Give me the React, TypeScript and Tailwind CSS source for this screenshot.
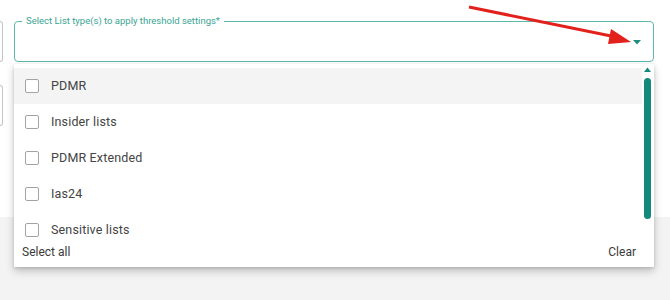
import React from "react";

const listTypes = ["PDMR", "Insider lists", "PDMR Extended", "Ias24", "Sensitive lists"];

const App: React.FC = () => {
  return (
    <div className="relative w-[670px] h-[300px] overflow-hidden bg-[#f3f3f3] font-['Roboto','Liberation_Sans',sans-serif]">
      {/* page card */}
      <div className="flex h-[217px] bg-white">
        <div className="flex w-[3px] flex-col gap-[23px] pt-[21px]">
          <div className="h-[41px] rounded-r-[4px] border border-l-0 border-[#c4c4c4]" />
          <div className="h-[41px] rounded-r-[4px] border border-l-0 border-[#c4c4c4]" />
        </div>
        <div className="ml-[11px] w-[640px]">
          <fieldset className="mt-[15px] h-[47px] rounded-[4px] border border-[#5db8ab] pl-[7px] pr-[12px]">
            <legend className="px-[4px] text-[9.5px] leading-[12px] text-[#3aa493]">
              Select List type(s) to apply threshold settings*
            </legend>
            <div className="flex h-[29px] items-center justify-end pt-[1px]">
              <svg width="8" height="5" viewBox="0 0 8 5">
                <path d="M0 0 L8 0 L4 4.5 Z" fill="#1f8e7f" />
              </svg>
            </div>
          </fieldset>
        </div>
      </div>

      {/* dropdown menu */}
      <div className="absolute left-[14px] top-[64px] flex h-[203px] w-[640px] flex-col bg-white shadow-[0_4px_8px_rgba(0,0,0,0.22),0_1px_3px_rgba(0,0,0,0.12)]">
        <div className="flex h-[176px] overflow-hidden">
          <ul className="flex-1 pt-[4px]">
            {listTypes.map((name, i) => (
              <li
                key={name}
                className={
                  "flex h-[36px] items-center pl-[11px] " + (i === 0 ? "bg-[#f4f4f4]" : "")
                }
              >
                <span className="h-[14px] w-[14px] rounded-[2px] border-[1.5px] border-[#a3a3a3] bg-white" />
                <span className="ml-[12px] text-[12.5px] tracking-[0.15px] text-[#444]">{name}</span>
              </li>
            ))}
          </ul>
          <div className="flex w-[12px] flex-col items-center pt-[3px] pr-[1px]">
            <svg width="7" height="5" viewBox="0 0 7 5">
              <path d="M0 5 L7 5 L3.5 0.5 Z" fill="#12897a" />
            </svg>
            <div className="mt-[6px] h-[141px] w-[7px] rounded-full bg-[#12897a]" />
          </div>
        </div>
        <div className="flex flex-1 items-center justify-between pl-[8px] pr-[18px] pb-[3px] text-[12px] text-[#3a3a3a]">
          <span>Select all</span>
          <span>Clear</span>
        </div>
      </div>

      {/* annotation arrow */}
      <svg className="pointer-events-none absolute left-0 top-0" width="670" height="300">
        <line x1="469" y1="7" x2="616" y2="37" stroke="#e3211c" strokeWidth="3" />
        <path d="M631 42 L611 29 L608 44 Z" fill="#e3211c" />
      </svg>
    </div>
  );
};

export default App;
